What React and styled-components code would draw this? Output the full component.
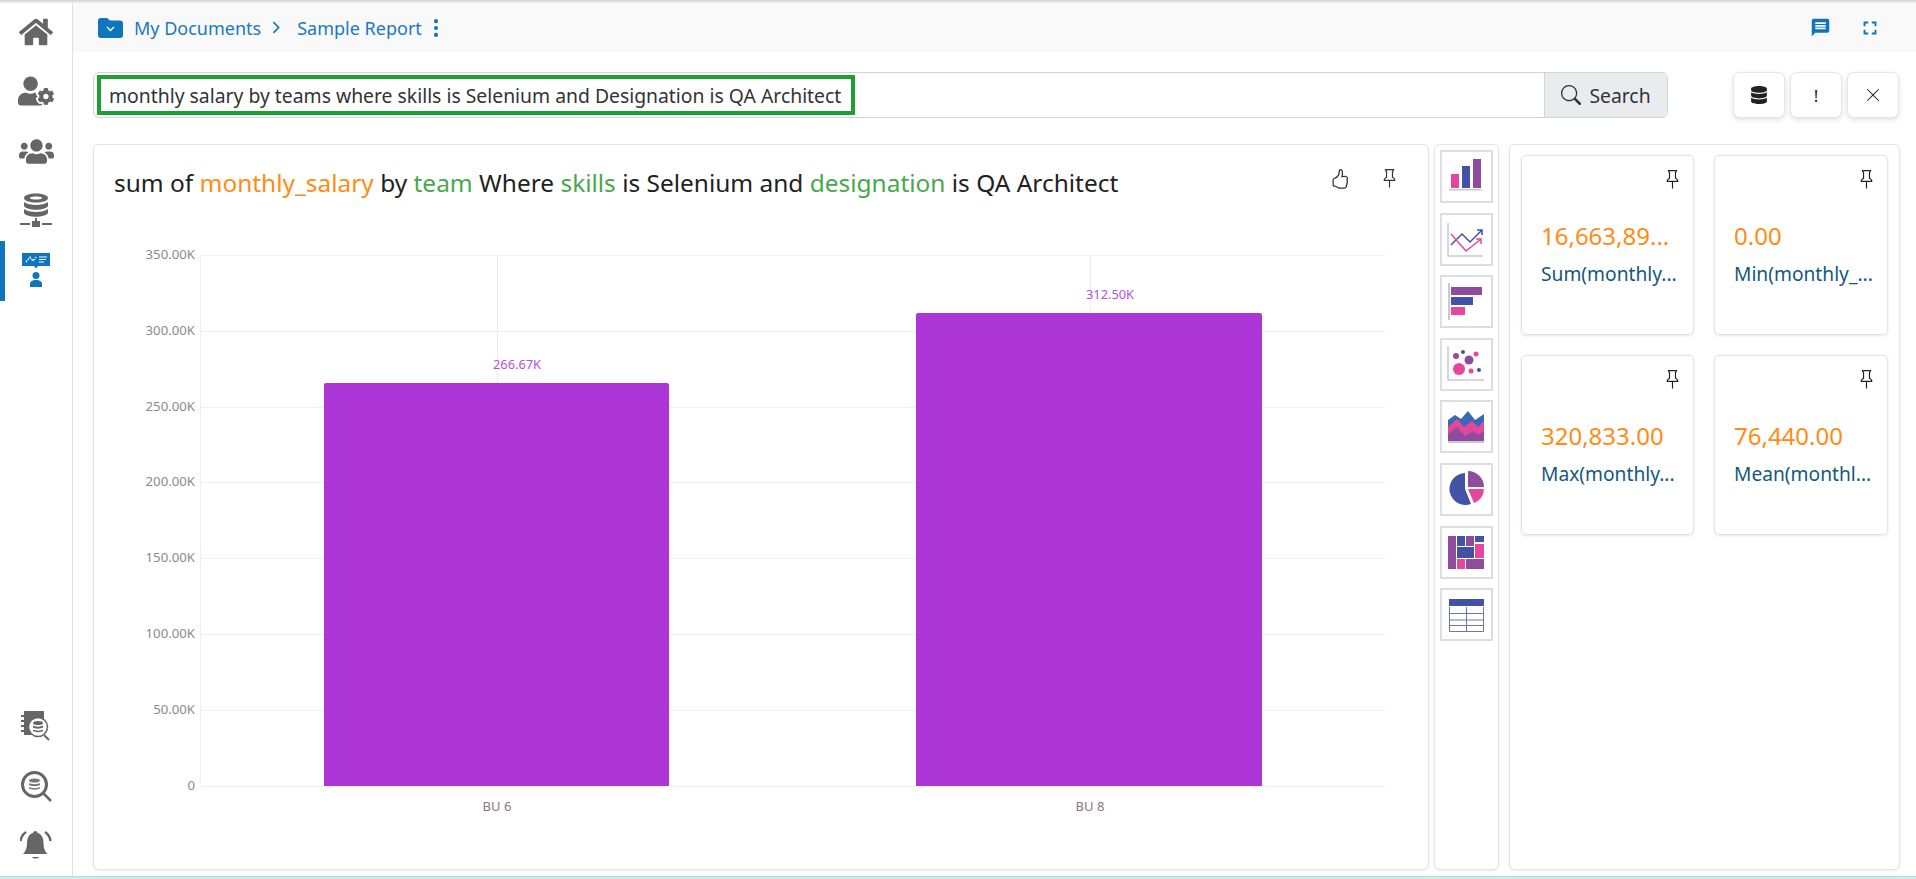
import React from "react";
import styled, { createGlobalStyle } from "styled-components";
import { FaHome, FaUserCog, FaUsers, FaDatabase } from "react-icons/fa";
import { MdMessage, MdFullscreen } from "react-icons/md";
import { BsPin, BsHandThumbsUp, BsSearch, BsXLg, BsThreeDotsVertical } from "react-icons/bs";
import { FaChevronRight } from "react-icons/fa6";

const PINK = "#e4479b";
const BLUE = "#4252a4";
const PURPLE = "#8f4c9e";
const AXIS = "#c9cad1";

const Global = createGlobalStyle`
  *, *::before, *::after { box-sizing: border-box; }
  html, body { margin: 0; padding: 0; background: #fff; overflow: hidden; }
  body { font-family: "Noto Sans", "Open Sans", sans-serif; }
`;

const Page = styled.div`
  height: 879px;
  display: flex;
  flex-direction: column;
`;
const Shade = styled.div`
  height: 3px;
  background: linear-gradient(#d2d2d2, #f0f0f0);
`;
const Body = styled.div`
  flex: 1;
  display: flex;
  min-height: 0;
`;
const Footer = styled.div`
  height: 3px;
  background: #cdeee8;
  border-top: 1px solid #b9dcd8;
`;
const Sidebar = styled.div`
  width: 73px;
  border-right: 1px solid #dedede;
  display: flex;
  flex-direction: column;
  justify-content: space-between;
`;
const SideGroup = styled.div`
  display: flex;
  flex-direction: column;
`;
const SideItem = styled.div`
  height: ${(p) => p.$h || 60}px;
  display: flex;
  align-items: center;
  justify-content: center;
  color: ${(p) => (p.$active ? "#0f75bc" : "#666")};
  border-left: 5px solid ${(p) => (p.$active ? "#0f75bc" : "transparent")};
  padding-right: 5px;
  font-size: ${(p) => p.$size || 34}px;
`;
const Main = styled.div`
  flex: 1;
  min-width: 0;
  display: flex;
  flex-direction: column;
`;
const TopBar = styled.div`
  height: 49px;
  background: #f9f9f9;
  display: flex;
  align-items: center;
  padding: 0 35px 0 25px;
  color: #1a78c2;
  font-size: 18px;
`;
const Crumb = styled.span`
  margin-left: ${(p) => p.$ml || 0}px;
`;
const TopSpacer = styled.div`
  flex: 1;
`;
const TopIcon = styled.span`
  display: inline-flex;
  margin-left: ${(p) => p.$ml || 0}px;
  font-size: ${(p) => p.$size || 20}px;
  color: #0f75bc;
`;
const SearchRow = styled.div`
  margin: 20px 17px 0 20px;
  height: 46px;
  display: flex;
`;
const SearchBox = styled.div`
  flex: 1;
  display: flex;
  border: 1px solid #ced4da;
  border-radius: 6px;
  align-items: center;
  padding-left: 3px;
`;
const Query = styled.div`
  border: 4px solid #1f9e32;
  height: 40px;
  width: 758px;
  display: flex;
  align-items: center;
  padding-left: 8px;
  font-size: 19.35px;
  color: #333;
  white-space: nowrap;
`;
const SearchButton = styled.div`
  margin-left: auto;
  align-self: stretch;
  width: 123px;
  background: #e9ecef;
  border-left: 1px solid #ced4da;
  border-radius: 0 6px 6px 0;
  display: flex;
  align-items: center;
  justify-content: center;
  gap: 8px;
  font-size: 19.35px;
  color: #333;
`;
const ActionGroup = styled.div`
  margin-left: 65px;
  display: flex;
  gap: 5px;
`;
const ActionButton = styled.div`
  width: 52px;
  height: 46px;
  border: 1px solid #e6e6e9;
  border-radius: 7px;
  background: #fff;
  box-shadow: 0 2px 5px rgba(0, 0, 0, 0.12);
  display: flex;
  align-items: center;
  justify-content: center;
  color: #222;
  font-size: ${(p) => p.$size || 18}px;
`;
const Content = styled.div`
  flex: 1;
  min-height: 0;
  margin: 26px 17px 6px 20px;
  display: flex;
`;
const Panel = styled.div`
  border: 1px solid #e3e4e8;
  border-radius: 6px;
  background: #fff;
  box-shadow: 0 1px 3px rgba(0, 0, 0, 0.08);
`;
const ChartCard = styled(Panel)`
  width: 1336px;
  display: flex;
  flex-direction: column;
`;
const ChartHead = styled.div`
  height: 79px;
  flex: none;
  display: flex;
  align-items: flex-start;
  padding: 21px 29px 0 20px;
`;
const Title = styled.div`
  flex: 1;
  font-size: 24.45px;
  line-height: 34px;
  color: #222;
  white-space: nowrap;
`;
const Word = styled.span`
  color: ${(p) => p.$c};
`;
const HeadIcon = styled.span`
  display: inline-flex;
  font-size: ${(p) => p.$size || 20}px;
  color: #333;
  margin-left: ${(p) => p.$ml || 0}px;
  margin-top: 3px;
`;
const TypesPanel = styled(Panel)`
  width: 65px;
  margin-left: 5px;
  padding: 5px 5px;
  display: flex;
  flex-direction: column;
  gap: 9.6px;
`;
const TypeTile = styled.div`
  width: 53px;
  height: 53px;
  border: 2px solid #dcdee3;
  display: flex;
  align-items: center;
  justify-content: center;
`;
const MetricsPanel = styled(Panel)`
  flex: 1;
  margin-left: 10px;
  padding: 10px 11px;
  display: grid;
  grid-template-columns: 173px 174px;
  column-gap: 20px;
  row-gap: 20px;
  align-content: start;
`;
const MetricCard = styled.div`
  height: 180px;
  border: 1px solid #e3e4e8;
  border-radius: 5px;
  box-shadow: 0 1px 3px rgba(0, 0, 0, 0.1);
  padding: 14px 11px 0 19px;
  display: flex;
  flex-direction: column;
`;
const PinRow = styled.div`
  height: 22px;
  display: flex;
  justify-content: flex-end;
  font-size: 19px;
  color: #222;
`;
const MetricValue = styled.div`
  margin-top: 27px;
  font-size: 24px;
  line-height: 34px;
  color: #ff8c14;
  white-space: nowrap;
`;
const MetricLabel = styled.div`
  margin-top: 8px;
  font-size: 19.2px;
  line-height: 26px;
  color: #14587c;
  white-space: nowrap;
`;

const Tick = styled.text`
  font-size: 13.2px;
  fill: #8a8a8a;
`;
const BarLabel = styled.text`
  font-size: 12.8px;
  fill: #b452df;
`;
const CatLabel = styled.text`
  font-size: 13px;
  fill: #8a7676;
`;

const ticks = [
  ["350.00K", 255],
  ["300.00K", 331],
  ["250.00K", 407],
  ["200.00K", 482],
  ["150.00K", 558],
  ["100.00K", 634],
  ["50.00K", 710],
  ["0", 786],
];

const bars = [
  { name: "BU 6", label: "266.67K", x: 324, w: 345, y: 383, cx: 497 },
  { name: "BU 8", label: "312.50K", x: 916, w: 346, y: 313, cx: 1090 },
];

const SalaryChart = () => (
  <svg width="1334" height="645" viewBox="94 224 1334 645">
    {ticks.map(([t, y]) => (
      <g key={t}>
        <line x1="200" x2="1385" y1={y + 0.5} y2={y + 0.5} stroke="#f0f0f3" />
        <Tick x="195" y={y + 4} textAnchor="end">{t}</Tick>
      </g>
    ))}
    <line x1="200.5" x2="200.5" y1="255" y2="786" stroke="#f0f0f3" />
    {bars.map((b) => (
      <g key={b.name}>
        <line x1={b.cx + 0.5} x2={b.cx + 0.5} y1="255" y2={b.y} stroke="#ececf0" />
        <path
          d={`M${b.x} 786V${b.y + 2}q0-2 2-2H${b.x + b.w - 2}q2 0 2 2V786z`}
          fill="#ae35d5"
        />
        <BarLabel x={b.cx + 20} y={b.y - 14} textAnchor="middle">{b.label}</BarLabel>
        <CatLabel x={b.cx} y="811" textAnchor="middle">{b.name}</CatLabel>
      </g>
    ))}
  </svg>
);

const Thumb = ({ children }) => (
  <svg width="43" height="43" viewBox="0 0 43 43">{children}</svg>
);

const chartThumbs = [
  <Thumb key="bar">
    <rect x="6" y="19" width="8" height="14" fill={PINK} />
    <rect x="17" y="11" width="8" height="22" fill={BLUE} />
    <rect x="28" y="4" width="8" height="29" fill={PURPLE} />
    <rect x="4" y="34" width="33" height="1.5" fill={AXIS} />
  </Thumb>,
  <Thumb key="line">
    <path d="M3 5V38H38" fill="none" stroke={AXIS} strokeWidth="1.500" />
    <path d="M6 27L17 16L25 24L37 12M32 12H37V17" fill="none" stroke={BLUE} strokeWidth="1.500" />
    <path d="M6 16L21 33L36 21M31 21H36V26" fill="none" stroke={PINK} strokeWidth="1.500" />
  </Thumb>,
  <Thumb key="hbar">
    <rect x="3" y="3" width="2" height="37" fill={AXIS} />
    <rect x="6" y="7" width="31" height="8" fill={PURPLE} />
    <rect x="6" y="17" width="22" height="8" fill={BLUE} />
    <rect x="6" y="27" width="14" height="8" fill={PINK} />
  </Thumb>,
  <Thumb key="bubble">
    <path d="M3 3V37H39" fill="none" stroke={AXIS} strokeWidth="1.500" />
    <circle cx="11" cy="13" r="3" fill={PURPLE} />
    <circle cx="18" cy="9" r="2" fill={BLUE} />
    <circle cx="31" cy="11" r="2.500" fill={PINK} />
    <circle cx="24" cy="17" r="4.500" fill={PURPLE} />
    <circle cx="14" cy="26" r="6" fill={PINK} />
    <circle cx="26" cy="28" r="2.500" fill={PINK} />
    <circle cx="34" cy="27" r="2" fill={BLUE} />
  </Thumb>,
  <Thumb key="area">
    <path d="M3 15L10 10L16 14L23 6L30 15L39 9V36H3z" fill="#3a68b4" />
    <path d="M3 22L12 14L19 22L27 16L33 22L39 16V36H3z" fill={PINK} />
    <path d="M3 29L12 22L20 31L28 26L33 30L39 26V36H3z" fill={PURPLE} />
    <rect x="3" y="36" width="36" height="2" fill={AXIS} />
  </Thumb>,
  <Thumb key="pie">
    <path d="M20 5A16 16 0 1 0 26 36L20 21z" fill={BLUE} />
    <path d="M23 3A16 16 0 0 1 39 19H23z" fill={PURPLE} />
    <path d="M23 21H39A16 16 0 0 1 29 35z" fill={PINK} />
  </Thumb>,
  <Thumb key="tree">
    <rect x="3" y="5" width="8" height="33" fill={PURPLE} />
    <rect x="12" y="5" width="8" height="10" fill={BLUE} />
    <rect x="21" y="5" width="8" height="10" fill={PURPLE} />
    <rect x="30" y="5" width="9" height="6" fill={BLUE} />
    <rect x="12" y="16" width="17" height="11" fill={BLUE} />
    <rect x="30" y="13" width="9" height="14" fill={PINK} />
    <rect x="12" y="28" width="8" height="10" fill={PINK} />
    <rect x="21" y="28" width="18" height="10" fill={PURPLE} />
  </Thumb>,
  <Thumb key="table">
    <rect x="4" y="6" width="35" height="7" fill={BLUE} />
    <path d="M4.500 14V38.500H38.500V14M4.500 20.500H38.500M4.500 27H38.500M4.500 32.500H38.500M21.500 14V38.500" fill="none" stroke="#6a76ba" />
  </Thumb>,
];

const metrics = [
  { value: "16,663,89...", label: "Sum(monthly..." },
  { value: "0.00", label: "Min(monthly_..." },
  { value: "320,833.00", label: "Max(monthly..." },
  { value: "76,440.00", label: "Mean(monthl..." },
];

const ServerIcon = () => (
  <svg width="32" height="36" viewBox="0 0 32 36" fill="#666">
    <path
      fillRule="evenodd"
      d="M4 5c0-6 24-6 24 0s-24 6-24 0zM10 5c0 2 12 2 12 0s-12-2-12 0zM4 9c5 4 19 4 24 0v4c-3 5-21 5-24 0zM4 16c5 4 19 4 24 0v4c-3 5-21 5-24 0z"
    />
    <rect x="15" y="25" width="2" height="5" />
    <rect x="0" y="30" width="10" height="2" />
    <rect x="22" y="30" width="10" height="2" />
    <rect x="12" y="28" width="8" height="6" />
  </svg>
);

const InsightIcon = () => (
  <svg width="30" height="36" viewBox="0 0 30 36">
    <path d="M1 0H29V13H17L15 15.500L13 13H1z" fill="#0f75bc" />
    <path d="M5 9L9 4L12 8L15 4" fill="none" stroke="#fff" strokeWidth="1.300" strokeDasharray="2 1" />
    <path d="M18 4H26M18 6.500H25M18 9H23" stroke="#fff" strokeWidth="1" />
    <circle cx="15" cy="22.500" r="3.500" fill="#0f75bc" />
    <path d="M9 34V31c0-3 3-4 6-4s6 1 6 4v3z" fill="#0f75bc" />
  </svg>
);

const ReportSearchIcon = () => (
  <svg width="30" height="32" viewBox="0 0 30 32">
    <path d="M3 1H23V10A10 10 0 0 0 12 25H3z" fill="#666" />
    <path d="M0 6H5M0 11H5M0 16H5M0 21H5" stroke="#666" strokeWidth="2" />
    <circle cx="17" cy="17" r="9.500" fill="#fff" stroke="#666" strokeWidth="1.500" />
    <ellipse cx="17" cy="13" rx="5" ry="2" fill="#666" />
    <path d="M12 15.500c2 1.500 8 1.500 10 0v2c-2 1.500-8 1.500-10 0zM12 19.500c2 1.500 8 1.500 10 0v1.500c-2 1.500-8 1.500-10 0z" fill="#666" />
    <path d="M23 25L28 30" stroke="#666" strokeWidth="2" />
  </svg>
);

const DataSearchIcon = () => (
  <svg width="31" height="31" viewBox="0 0 31 31">
    <circle cx="13.500" cy="13.500" r="12" fill="none" stroke="#666" strokeWidth="3" />
    <ellipse cx="13.500" cy="9.500" rx="5.500" ry="2" fill="#777" />
    <path d="M8 12c2 1.500 9 1.500 11 0v2c-2 1.500-9 1.500-11 0zM8 16c2 1.500 9 1.500 11 0v1.500c-2 1.500-9 1.500-11 0z" fill="#777" />
    <path d="M22 22L30 30" stroke="#666" strokeWidth="2.500" />
  </svg>
);

const AlarmIcon = () => (
  <svg width="32" height="32" viewBox="0 0 32 32" fill="none">
    <path d="M15.500 1c1 0 2 1 2 2 4 1 6 5 6 10 0 6 2 9 4 11H3c2-2 4-5 4-11 0-5 2-9 6-10 0-1 1-2 2.500-2z" fill="#666" />
    <path d="M12 27h7c-1 2-6 2-7 0z" fill="#666" />
    <path d="M6 2C3 4 1 7 0.500 11M25 2c3 2 5 5 5.500 9" stroke="#666" strokeWidth="2.500" />
  </svg>
);

const FolderIcon = () => (
  <svg width="25" height="20" viewBox="0 0 25 20">
    <path d="M0 3a3 3 0 0 1 3-3h6l3 2.500h10a3 3 0 0 1 3 3V17a3 3 0 0 1-3 3H3a3 3 0 0 1-3-3z" fill="#0f75bc" />
    <path d="M9 9L12.500 12.500L16 9" fill="none" stroke="#fff" strokeWidth="1.300" />
  </svg>
);

export default function App() {
  return (
    <Page>
      <Global />
      <Shade />
      <Body>
        <Sidebar>
          <SideGroup>
            <SideItem $h={58}><FaHome /></SideItem>
            <SideItem $h={60} $size={36}><FaUserCog /></SideItem>
            <SideItem $h={60} $size={35}><FaUsers /></SideItem>
            <SideItem $h={60}><ServerIcon /></SideItem>
            <SideItem $h={60} $active><InsightIcon /></SideItem>
          </SideGroup>
          <SideGroup>
            <SideItem $h={60}><ReportSearchIcon /></SideItem>
            <SideItem $h={60}><DataSearchIcon /></SideItem>
            <SideItem $h={60}><AlarmIcon /></SideItem>
          </SideGroup>
        </Sidebar>
        <Main>
          <TopBar>
            <FolderIcon />
            <Crumb $ml={11}>My Documents</Crumb>
            <TopIcon $ml={8} $size={13}><FaChevronRight /></TopIcon>
            <Crumb $ml={15}>Sample Report</Crumb>
            <TopIcon $ml={3} $size={22}><BsThreeDotsVertical /></TopIcon>
            <TopSpacer />
            <TopIcon $size={21}><MdMessage /></TopIcon>
            <TopIcon $ml={28} $size={22}><MdFullscreen /></TopIcon>
          </TopBar>
          <SearchRow>
            <SearchBox>
              <Query>monthly salary by teams where skills is Selenium and Designation is QA Architect</Query>
              <SearchButton><BsSearch size={20} />Search</SearchButton>
            </SearchBox>
            <ActionGroup>
              <ActionButton><FaDatabase /></ActionButton>
              <ActionButton $size={17}>!</ActionButton>
              <ActionButton $size={16}><BsXLg /></ActionButton>
            </ActionGroup>
          </SearchRow>
          <Content>
            <ChartCard>
              <ChartHead>
                <Title>
                  sum of <Word $c="#ff8c14">monthly_salary</Word> by <Word $c="#47a84e">team</Word> Where{" "}
                  <Word $c="#47a84e">skills</Word> is Selenium and <Word $c="#47a84e">designation</Word> is QA Architect
                </Title>
                <HeadIcon $size={20}><BsHandThumbsUp /></HeadIcon>
                <HeadIcon $size={19} $ml={30}><BsPin /></HeadIcon>
              </ChartHead>
              <SalaryChart />
            </ChartCard>
            <TypesPanel>
              {chartThumbs.map((thumb, i) => (
                <TypeTile key={i}>{thumb}</TypeTile>
              ))}
            </TypesPanel>
            <MetricsPanel>
              {metrics.map((m) => (
                <MetricCard key={m.label}>
                  <PinRow><BsPin /></PinRow>
                  <MetricValue>{m.value}</MetricValue>
                  <MetricLabel>{m.label}</MetricLabel>
                </MetricCard>
              ))}
            </MetricsPanel>
          </Content>
        </Main>
      </Body>
      <Footer />
    </Page>
  );
}
